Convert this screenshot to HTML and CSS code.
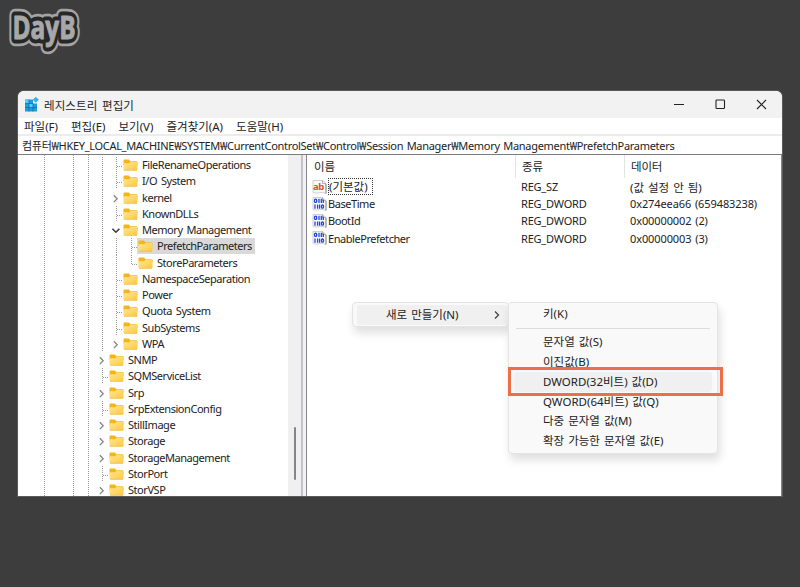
FILE: index.html
```html
<!DOCTYPE html>
<html lang="ko">
<head>
<meta charset="UTF-8">
<title>레지스트리 편집기</title>
<link rel="stylesheet" href="styles.css">
</head>
<body>
<svg class="defs" width="0" height="0">
  <defs>
    <linearGradient id="fold" x1="0" y1="0" x2="1" y2="1">
      <stop offset="0" stop-color="#ffe694"/>
      <stop offset="1" stop-color="#fdc93f"/>
    </linearGradient>
    <symbol id="folder" viewBox="0 0 15 12">
      <path d="M.5 1.5q0-1 1-1h4.3l1.7 1.7h6q1 0 1 1v3H.5z" fill="#f5b417"/>
      <path d="M.5 4.2h5.6l1.5-1.4h6q.9 0 .9.9v6.8q0 1-1 1h-12q-1 0-1-1z" fill="url(#fold)"/>
      <path d="M1 11.3h13" stroke="#eab43c" stroke-width=".6"/>
    </symbol>
    <symbol id="right" viewBox="0 0 14 16">
      <path d="M4.8 5.3l3.4 3.4-3.4 3.4" fill="none" stroke="#858585" stroke-width="1.3"/>
    </symbol>
    <symbol id="down" viewBox="0 0 14 16">
      <path d="M3.4 6.8l3.5 3.4 3.5-3.4" fill="none" stroke="#3c3c3c" stroke-width="1.6"/>
    </symbol>
    <symbol id="page" viewBox="0 0 15 14">
      <path d="M1 .5h9.5l3.5 3v10q-3.500-2-6.500-.8-3 1-6.500-.2z" fill="#fbfbfb" stroke="#c3c3c3" stroke-width=".8"/>
      <path d="M10.500.6v3h3.400" fill="none" stroke="#999" stroke-width=".8"/>
      <path d="M14 4v9.500" stroke="#8d8d8d"/>
    </symbol>
    <symbol id="binary" viewBox="0 0 15 14">
      <use href="#page"/>
      <g fill="none" stroke="#2346dc" stroke-width="1.300">
        <rect x="2.500" y="2.200" width="2.200" height="3.200" rx="1"/>
        <path d="M7 1.700v4.200M9.300 1.700v4.200M11.300 2.500v3.400M3 7.500v4.300M5.600 7.500v4.300M7.600 7.500v4.300"/>
        <rect x="9.500" y="8" width="2" height="3.200" rx="1"/>
      </g>
    </symbol>
  </defs>
</svg>

<svg class="logo" width="86" height="60" viewBox="0 0 86 60">
  <text class="ring" transform="translate(12.500 39) scale(.74 1)">DayB</text>
  <text class="rim" transform="translate(12.500 39) scale(.74 1)">DayB</text>
  <text class="face" transform="translate(12.500 39) scale(.74 1)">DayB</text>
</svg>

<div class="window">
  <div class="titlebar">
    <svg class="app-icon" width="15" height="15" viewBox="0 0 15 15">
      <path d="M1 2.500h8v4h4v8H1z" fill="#1b9de0"/>
      <path d="M1 2.500h4v4H1zM5 6.500h4v4H5z" fill="#4fd0fa"/>
      <path d="M1 6.500h8M1 10.500h12M5 2.500v12M9 6.500v8" stroke="#0b6cab" stroke-width=".7"/>
      <path d="M11.800.300l2.500 2.500-2.500 2.500-2.500-2.500z" fill="#39b8ee" stroke="#1483c4" stroke-width=".6"/>
    </svg>
    <span class="title">레지스트리 편집기</span>
    <div class="controls">
      <svg width="41" height="27" viewBox="0 0 41 27"><path d="M15 13.500h10"/></svg>
      <svg width="41" height="27" viewBox="0 0 41 27"><rect x="16" y="9" width="8.500" height="8.500" rx=".8"/></svg>
      <svg width="41" height="27" viewBox="0 0 41 27"><path d="M16 9l9 9M25 9l-9 9"/></svg>
    </div>
  </div>
  <div class="menubar">
    <span>파일(F)</span>
    <span>편집(E)</span>
    <span>보기(V)</span>
    <span>즐겨찾기(A)</span>
    <span>도움말(H)</span>
  </div>
  <div class="address">컴퓨터₩HKEY_LOCAL_MACHINE₩SYSTEM₩CurrentControlSet₩Control₩Session Manager₩Memory Management₩PrefetchParameters</div>

  <div class="panes">
    <ul class="tree">
      <li class="deep"><i class="elbow"></i><svg class="folder"><use href="#folder"/></svg><span>FileRenameOperations</span></li>
      <li class="deep"><i class="elbow"></i><svg class="folder"><use href="#folder"/></svg><span>I/O System</span></li>
      <li class="deep"><svg class="toggle"><use href="#right"/></svg><svg class="folder"><use href="#folder"/></svg><span>kernel</span></li>
      <li class="deep"><i class="elbow"></i><svg class="folder"><use href="#folder"/></svg><span>KnownDLLs</span></li>
      <li class="deep"><svg class="toggle"><use href="#down"/></svg><svg class="folder"><use href="#folder"/></svg><span>Memory Management</span></li>
      <li class="deepest"><i class="elbow"></i><div class="selected"><svg class="folder"><use href="#folder"/></svg><span>PrefetchParameters</span></div></li>
      <li class="deepest"><i class="elbow last"></i><svg class="folder"><use href="#folder"/></svg><span>StoreParameters</span></li>
      <li class="deep"><i class="elbow"></i><svg class="folder"><use href="#folder"/></svg><span>NamespaceSeparation</span></li>
      <li class="deep"><i class="elbow"></i><svg class="folder"><use href="#folder"/></svg><span>Power</span></li>
      <li class="deep"><i class="elbow"></i><svg class="folder"><use href="#folder"/></svg><span>Quota System</span></li>
      <li class="deep"><i class="elbow"></i><svg class="folder"><use href="#folder"/></svg><span>SubSystems</span></li>
      <li class="deep"><svg class="toggle"><use href="#right"/></svg><svg class="folder"><use href="#folder"/></svg><span>WPA</span></li>
      <li><svg class="toggle"><use href="#right"/></svg><svg class="folder"><use href="#folder"/></svg><span>SNMP</span></li>
      <li><i class="elbow"></i><svg class="folder"><use href="#folder"/></svg><span>SQMServiceList</span></li>
      <li><svg class="toggle"><use href="#right"/></svg><svg class="folder"><use href="#folder"/></svg><span>Srp</span></li>
      <li><i class="elbow"></i><svg class="folder"><use href="#folder"/></svg><span>SrpExtensionConfig</span></li>
      <li><svg class="toggle"><use href="#right"/></svg><svg class="folder"><use href="#folder"/></svg><span>StillImage</span></li>
      <li><svg class="toggle"><use href="#right"/></svg><svg class="folder"><use href="#folder"/></svg><span>Storage</span></li>
      <li><svg class="toggle"><use href="#right"/></svg><svg class="folder"><use href="#folder"/></svg><span>StorageManagement</span></li>
      <li><i class="elbow"></i><svg class="folder"><use href="#folder"/></svg><span>StorPort</span></li>
      <li><svg class="toggle"><use href="#right"/></svg><svg class="folder"><use href="#folder"/></svg><span>StorVSP</span></li>
    </ul>
    <div class="scrollbar"><div class="thumb"></div></div>
    <div class="splitter"></div>

    <div class="values">
      <div class="line head"><span>이름</span><span>종류</span><span>데이터</span></div>
      <div class="line">
        <div class="name"><svg class="value-icon" viewBox="0 0 15 14"><use href="#page"/><text x="1" y="9.500">ab</text></svg><span class="focus">(기본값)</span></div>
        <span>REG_SZ</span><span class="none">(값 설정 안 됨)</span>
      </div>
      <div class="line">
        <div class="name"><svg class="value-icon"><use href="#binary"/></svg><span>BaseTime</span></div>
        <span>REG_DWORD</span><span class="num">0x274eea66 (659483238)</span>
      </div>
      <div class="line">
        <div class="name"><svg class="value-icon"><use href="#binary"/></svg><span>BootId</span></div>
        <span>REG_DWORD</span><span class="num">0x00000002 (2)</span>
      </div>
      <div class="line">
        <div class="name"><svg class="value-icon"><use href="#binary"/></svg><span>EnablePrefetcher</span></div>
        <span>REG_DWORD</span><span class="num">0x00000003 (3)</span>
      </div>
    </div>
  </div>
</div>

<div class="menu context">
  <div class="item active"><span>새로 만들기(N)</span>
    <svg width="8" height="10" viewBox="0 0 8 10"><path d="M2 1.500L5.500 5 2 8.500" fill="none" stroke="#444" stroke-width="1.300"/></svg>
  </div>
</div>
<div class="menu submenu">
  <div class="item">키(K)</div>
  <hr>
  <div class="item">문자열 값(S)</div>
  <div class="item">이진값(B)</div>
  <div class="item active">DWORD(32비트) 값(D)</div>
  <div class="item">QWORD(64비트) 값(Q)</div>
  <div class="item">다중 문자열 값(M)</div>
  <div class="item">확장 가능한 문자열 값(E)</div>
</div>
<div class="marker"></div>
</body>
</html>
```

FILE: styles.css
```css
* {
  box-sizing: border-box;
}
body {
  margin: 0;
  height: 587px;
  padding: 91px 18px 0;
  overflow: hidden;
  background: #3d3d3d;
  color: #222;
  font-family: "Noto Sans", "Noto Sans CJK KR", sans-serif;
  font-size: 11px;
  letter-spacing: -0.2px;
  white-space: nowrap;
}
.defs {
  position: absolute;
}
.logo {
  position: absolute;
  left: 0;
  top: 0;
}
.logo text {
  font-family: "Open Sans", sans-serif;
  font-weight: 700;
  font-size: 33px;
  letter-spacing: 0;
  stroke-linejoin: round;
}
.logo .ring {
  fill: #a3a3a3;
  stroke: #a3a3a3;
  stroke-width: 14.5px;
}
.logo .rim {
  fill: #272727;
  stroke: #272727;
  stroke-width: 9px;
}
.logo .face {
  fill: #a8a8a8;
  stroke: #a8a8a8;
  stroke-width: 1px;
}

.window {
  width: 764px;
  height: 405px;
  overflow: hidden;
  background: #fff;
  border-radius: 6px 6px 0 0;
  box-shadow: 0 0 0 1px #5c5957;
}
.titlebar {
  display: flex;
  align-items: center;
  height: 27px;
  padding-left: 6px;
  background: #f2f2f2;
}
.title {
  margin-left: 5px;
  font-size: 11.5px;
  letter-spacing: 0.1px;
  word-spacing: 1.5px;
}
.controls {
  display: flex;
  margin-left: auto;
}
.controls svg {
  fill: none;
  stroke: #222;
  stroke-width: 1.1;
}
.menubar {
  display: flex;
  gap: 13px;
  height: 18px;
  padding-left: 6px;
  font-size: 11.5px;
  letter-spacing: 0;
  line-height: 18px;
  border-bottom: 2px solid #ececec;
}
.address {
  height: 19px;
  padding-left: 4px;
  letter-spacing: -0.3px;
  word-spacing: 1px;
  line-height: 19px;
  border-bottom: 1px solid #7b7b83;
}
.panes {
  display: flex;
  height: 341px;
}

/* registry tree */
.tree {
  width: 270px;
  margin: 0;
  padding: 2px 0 0;
  overflow: hidden;
  list-style: none;
  letter-spacing: -0.45px;
  word-spacing: 1.5px;
  background:
    repeating-linear-gradient(#999 0 1px, transparent 1px 2px) 26px 0 / 1px 100% no-repeat,
    repeating-linear-gradient(#999 0 1px, transparent 1px 2px) 55px 0 / 1px 100% no-repeat,
    repeating-linear-gradient(#999 0 1px, transparent 1px 2px) 70px 0 / 1px 100% no-repeat;
}
.tree li {
  display: flex;
  align-items: center;
  height: 16.25px;
  padding-left: 77px;
  line-height: 16px;
}
.tree li.deep {
  padding-left: 91px;
  background: repeating-linear-gradient(#999 0 1px, transparent 1px 2px) 84px 0 / 1px 100% no-repeat;
}
.tree li.deepest {
  padding-left: 106px;
  background:
    repeating-linear-gradient(#999 0 1px, transparent 1px 2px) 84px 0 / 1px 100% no-repeat,
    repeating-linear-gradient(#999 0 1px, transparent 1px 2px) 98px 0 / 1px 100% no-repeat;
}
.elbow,
.toggle {
  flex: none;
  width: 14px;
  height: 16px;
}
.elbow {
  background:
    repeating-linear-gradient(#999 0 1px, transparent 1px 2px) 7px 0 / 1px 100% no-repeat,
    repeating-linear-gradient(90deg, #999 0 1px, transparent 1px 2px) 8px 9px / 6px 1px no-repeat;
}
.elbow.last {
  background-size: 1px 9px, 6px 1px;
}
.folder {
  flex: none;
  width: 15px;
  height: 12px;
  margin-right: 4px;
}
.selected {
  display: flex;
  align-items: center;
  height: 16px;
  margin-left: -1px;
  padding: 0 3px 0 1px;
  background: #d9d9d9;
}
.scrollbar {
  width: 13px;
  padding: 272px 0 0 6px;
  background: #f0f0f0;
}
.thumb {
  width: 2px;
  height: 53px;
  border-radius: 1px;
  background: #858585;
}
.splitter {
  width: 6px;
  border: solid #85858d;
  border-width: 0 1px 0 2px;
  border-left-color: #c2c2c8;
  background: #f2f2f2;
}

/* value list */
.values {
  flex: 1;
  border-right: 1px solid #85858d;
}
.line {
  display: grid;
  grid-template-columns: 214px 109px 1fr;
  align-items: center;
  height: 17.2px;
}
.head {
  height: 23px;
}
.head span {
  height: 23px;
  font-size: 11.5px;
  line-height: 24px;
}
.head span:first-child {
  padding-left: 7px;
}
.head span + span {
  margin-left: -6px;
  padding-left: 6px;
  border-left: 1px solid #e3e3e3;
}
.name {
  display: flex;
  align-items: center;
  padding-left: 5px;
  letter-spacing: -0.45px;
}
.value-icon {
  width: 15px;
  height: 14px;
  margin-right: 1px;
}
.value-icon text {
  fill: #d9502c;
  font-size: 9.5px;
  font-weight: 700;
}
.focus {
  height: 17px;
  padding: 0 5px 0 1px;
  font-size: 11.5px;
  letter-spacing: 0;
  line-height: 17px;
  outline: 1px dotted #333;
  outline-offset: -1px;
}
.none {
  font-size: 11.5px;
  letter-spacing: 0;
  word-spacing: 1px;
}
.num {
  letter-spacing: -0.1px;
  word-spacing: 1px;
}

/* popup menus */
.menu {
  position: absolute;
  top: 302px;
  font-size: 11.5px;
  letter-spacing: 0;
  word-spacing: 1px;
  background: #f9f9f9;
  border: 1px solid #e4e4e4;
  border-radius: 4px;
  box-shadow: 2px 6px 10px rgba(0, 0, 0, 0.13);
}
.item {
  height: 19.9px;
  padding-left: 29px;
  line-height: 20px;
  border-radius: 3px;
}
.item.active {
  background: #f0f0f0;
}
.context {
  left: 352px;
  width: 157px;
  height: 25px;
  padding: 2px 0 0 4px;
}
.context .item {
  display: flex;
  align-items: center;
  justify-content: space-between;
  padding-right: 7px;
}
.submenu {
  left: 508px;
  width: 210px;
  height: 152px;
  padding: 1px 5px 0;
}
.submenu hr {
  height: 1px;
  margin: 4px 2px 3px;
  border: 0;
  background: #dcdcdc;
}
.marker {
  position: absolute;
  left: 508px;
  top: 367px;
  width: 215px;
  height: 29px;
  border: 3px solid #eb7048;
}
```
